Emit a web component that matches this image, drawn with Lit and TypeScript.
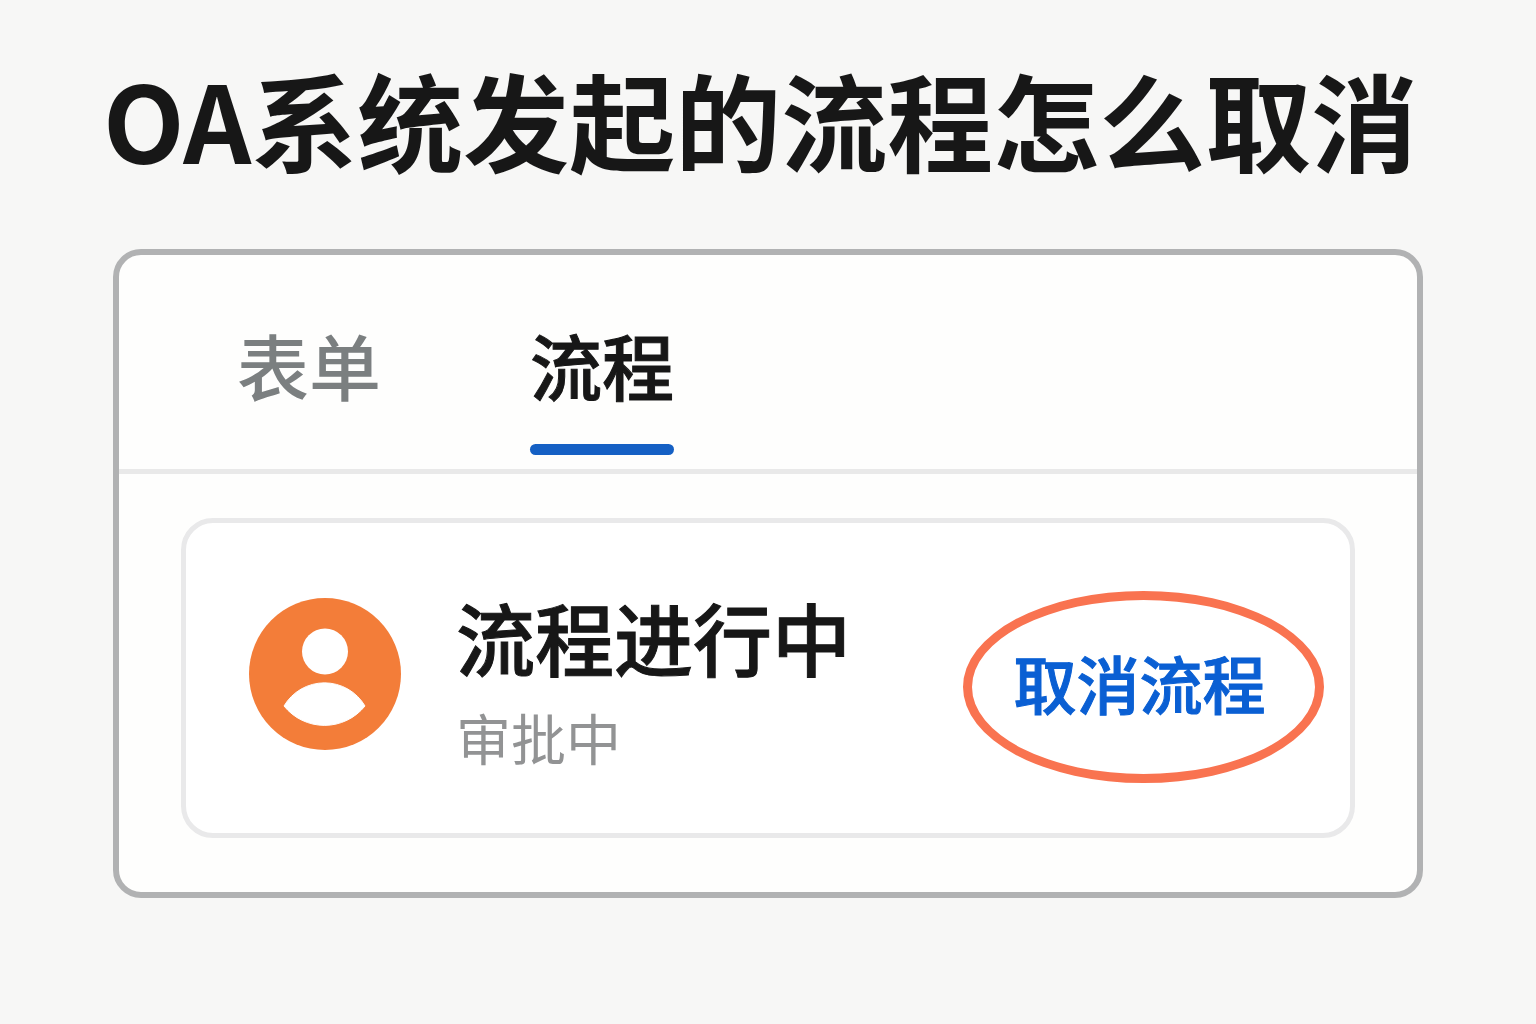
import { LitElement, html, css } from "lit";
import { customElement, state } from "lit/decorators.js";

@customElement("app-root")
export class AppRoot extends LitElement {
  @state() private tab = 1;

  static styles = css`
    :host {
      display: block;
      box-sizing: border-box;
      min-height: 100vh;
      padding: 42px 113px 126px;
      background: #f7f7f6;
      font-family: "Noto Sans CJK SC", sans-serif;
      color: #171717;
    }
    * { box-sizing: border-box; }
    h1, h2, p { margin: 0; }
    .title {
      margin: 0 -10px;
      font-size: 106px;
      line-height: 152px;
      font-weight: 700;
      white-space: nowrap;
    }
    .panel {
      margin-top: 55px;
      border: 6px solid #b1b2b3;
      border-radius: 28px;
      background: #fefefd;
    }
    .tabs {
      display: flex;
      gap: 149px;
      padding: 59px 118px 14px;
      border-bottom: 5px solid #e9e9e9;
    }
    .tab {
      display: flex;
      flex-direction: column;
      gap: 30px;
      padding: 0;
      border: 0;
      background: none;
      color: #7b7f80;
      font: 500 72px/100px "Noto Sans CJK SC", sans-serif;
    }
    .tab::after {
      content: "";
      width: 100%;
      height: 11px;
      border-radius: 6px;
    }
    .tab.active {
      color: #171717;
      -webkit-text-stroke: 1px currentColor;
    }
    .tab.active::after { background: #1560c4; }
    .body { padding: 44px 62px 54px; }
    .card {
      display: flex;
      align-items: flex-start;
      justify-content: space-between;
      padding: 51px 26px 50px 63px;
      border: 5px solid #e9e9ea;
      border-radius: 32px;
      background: #fff;
    }
    .summary {
      display: flex;
      align-items: center;
      gap: 55px;
    }
    .avatar { width: 152px; height: 152px; flex: none; }
    .info { padding-bottom: 2px; }
    .status {
      font-size: 79px;
      line-height: 126px;
      font-weight: 500;
      -webkit-text-stroke: 1px currentColor;
    }
    .sub { font-size: 55px; line-height: 72px; color: #929394; }
    .cancel {
      width: 361px;
      height: 192px;
      margin-top: 17px;
      padding: 0 8px 10px 0;
      border: 9px solid #f97350;
      border-radius: 50%;
      background: none;
      color: #0a5fd3;
      font: 500 63px/90px "Noto Sans CJK SC", sans-serif;
      -webkit-text-stroke: 1px currentColor;
    }
  `;

  render() {
    return html`
      <h1 class="title">OA系统发起的流程怎么取消</h1>
      <main class="panel">
        <nav class="tabs" role="tablist">
          ${["表单", "流程"].map(
            (name, i) => html`<button
              class="tab ${this.tab === i ? "active" : ""}"
              role="tab"
              aria-selected=${this.tab === i}
              @click=${() => (this.tab = i)}
            >${name}</button>`
          )}
        </nav>
        <div class="body">
          <section class="card">
            <div class="summary">
              <svg class="avatar" viewBox="0 0 152 152" aria-hidden="true">
                <circle cx="76" cy="76" r="76" fill="#f37d39" />
                <circle cx="76" cy="53.5" r="23" fill="#fff" />
                <path
                  d="M35 108A47 47 0 0 1 116 108A52 52 0 0 1 35 108Z"
                  fill="#fff" stroke="#fff" stroke-width="1" stroke-linejoin="round"
                />
              </svg>
              <div class="info">
                <h2 class="status">流程进行中</h2>
                <p class="sub">审批中</p>
              </div>
            </div>
            <button class="cancel">取消流程</button>
          </section>
        </div>
      </main>
    `;
  }
}
